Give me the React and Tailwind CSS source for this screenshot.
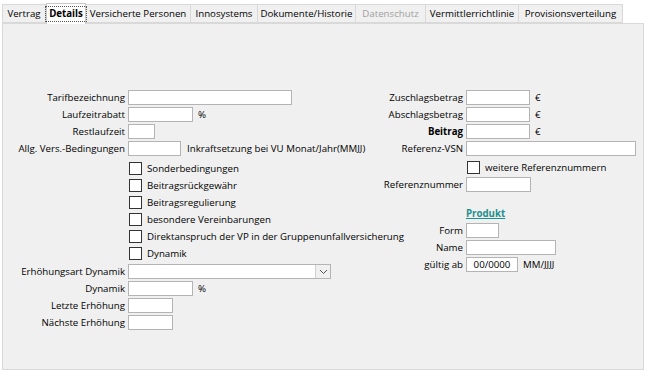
import React from 'react';

const tabs = [
  { label: 'Vertrag', w: 'w-[44px]' },
  { label: 'Details', w: 'w-[40px]', active: true },
  { label: 'Versicherte Personen', w: 'w-[105px]' },
  { label: 'Innosystems', w: 'w-[67px]' },
  { label: 'Dokumente/Historie', w: 'w-[98px]' },
  { label: 'Datenschutz', w: 'w-[70px]', disabled: true },
  { label: 'Vermittlerrichtlinie', w: 'w-[93px]' },
  { label: 'Provisionsverteilung', w: 'w-[104px]' },
];

function Box({ w }) {
  return <div className={`h-[15px] ${w} bg-white border border-[#b4b4b4]`} />;
}

function Check({ label }) {
  return (
    <div className="flex items-center h-[17px] whitespace-nowrap">
      <div className="w-[13px] h-[13px] ml-[1px] shrink-0 bg-white border border-[#333]" />
      <span className="ml-[5px]">{label}</span>
    </div>
  );
}

function Row({ label, lw, bold, children }) {
  return (
    <div className="flex items-center h-[17px]">
      <div className={`${lw} shrink-0 text-right pr-[3px] whitespace-nowrap ${bold ? 'font-bold' : ''}`}>{label}</div>
      {children}
    </div>
  );
}

export default function App() {
  const L = 'w-[125px]';
  const R = 'w-[96px]';
  return (
    <div className="w-[647px] h-[371px] bg-white text-[9.7px] text-black font-['Open_Sans',sans-serif] leading-none relative overflow-hidden">
      {/* Tabs */}
      <div className="flex h-[23px] pl-[2px] items-end">
        {tabs.map((t) =>
          t.active ? (
            <div key={t.label} className={`${t.w} h-[21px] -mb-px z-10 bg-white border border-[#c8c8c8] border-b-0 flex items-center justify-center font-bold`}>
              <span className="outline-1 outline-dotted outline-[#555] outline-offset-2 px-[1px]">{t.label}</span>
            </div>
          ) : (
            <div key={t.label} className={`${t.w} h-[19px] bg-[#f0f0f0] border border-[#d9d9d9] border-l-0 first:border-l flex items-center justify-center whitespace-nowrap ${t.disabled ? 'text-[#a0a0a0]' : ''}`}>
              {t.label}
            </div>
          )
        )}
      </div>

      {/* Panel */}
      <div className="ml-[2px] w-[642px] h-[347px] bg-[#f0f0f0] border border-[#d9d9d9] flex pt-[65px]">
        {/* Left column */}
        <div className="w-[367px] shrink-0">
          <Row label="Tarifbezeichnung" lw={L}><Box w="w-[164px]" /></Row>
          <Row label="Laufzeitrabatt" lw={L}><Box w="w-[65px]" /><span className="ml-[5px]">%</span></Row>
          <Row label="Restlaufzeit" lw={L}><Box w="w-[27px]" /></Row>
          <Row label="Allg. Vers.-Bedingungen" lw={L}><Box w="w-[53px]" /><span className="ml-[6px] whitespace-nowrap">Inkraftsetzung bei VU Monat/Jahr(MMJJ)</span></Row>
          <div className="pl-[125px] mt-[3px]">
            <Check label="Sonderbedingungen" />
            <Check label="Beitragsrückgewähr" />
            <Check label="Beitragsregulierung" />
            <Check label="besondere Vereinbarungen" />
            <Check label="Direktanspruch der VP in der Gruppenunfallversicherung" />
            <Check label="Dynamik" />
          </div>
          <div className="mt-px">
            <Row label="Erhöhungsart Dynamik" lw={L}>
              <div className="h-[15px] w-[203px] bg-white border border-[#b4b4b4] flex justify-end">
                <div className="w-[15px] h-full bg-[#f0f0f0] border-l border-[#d0d0d0] flex items-center justify-center">
                  <svg width="9" height="6" viewBox="0 0 9 6"><path d="M1 1l3.5 3.5L8 1" fill="none" stroke="#555" strokeWidth="1" /></svg>
                </div>
              </div>
            </Row>
            <Row label="Dynamik" lw={L}><Box w="w-[65px]" /><span className="ml-[5px]">%</span></Row>
            <Row label="Letzte Erhöhung" lw={L}><Box w="w-[45px]" /></Row>
            <Row label="Nächste Erhöhung" lw={L}><Box w="w-[45px]" /></Row>
          </div>
        </div>

        {/* Right column */}
        <div className="flex-1">
          <Row label="Zuschlagsbetrag" lw={R}><Box w="w-[64px]" /><span className="ml-[5px]">€</span></Row>
          <Row label="Abschlagsbetrag" lw={R}><Box w="w-[64px]" /><span className="ml-[5px]">€</span></Row>
          <Row label="Beitrag" lw={R} bold><Box w="w-[64px]" /><span className="ml-[5px]">€</span></Row>
          <Row label="Referenz-VSN" lw={R}><Box w="w-[170px]" /></Row>
          <div className="pl-[96px] mt-[2px]">
            <Check label="weitere Referenznummern" />
          </div>
          <Row label="Referenznummer" lw={R}><Box w="w-[65px]" /></Row>
          <div className="pl-[96px] mt-[12px] h-[17px] flex items-center">
            <span className="font-bold text-[#1f8f8f] underline">Produkt</span>
          </div>
          <Row label="Form" lw={R}><Box w="w-[33px]" /></Row>
          <Row label="Name" lw={R}><Box w="w-[90px]" /></Row>
          <Row label="gültig ab" lw={R}>
            <div className="h-[15px] w-[52px] bg-white border border-[#b4b4b4] flex items-center justify-center">00/0000</div>
            <span className="ml-[5px]">MM/JJJJ</span>
          </Row>
        </div>
      </div>
    </div>
  );
}
